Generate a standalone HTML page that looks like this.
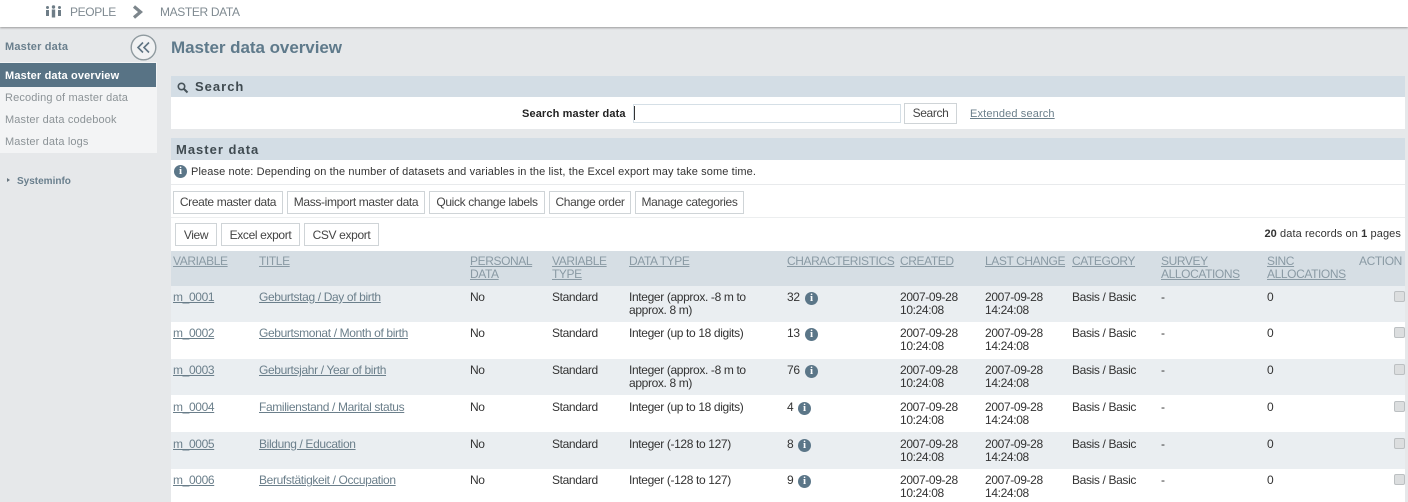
<!DOCTYPE html>
<html><head><meta charset="utf-8"><style>
html,body{margin:0;padding:0;width:1408px;height:502px;overflow:hidden}
body{position:relative;background:#e6e8ea}
#w{left:0;top:0;width:1408px;height:502px;overflow:hidden;background:#e6e8ea;font:12px/13px "Liberation Sans",sans-serif;letter-spacing:-.36px;color:#333;filter:blur(.3px)}
#w,#w *{position:absolute;box-sizing:border-box;white-space:nowrap}
a,.a{color:#6b7f8b;text-decoration:underline}
.h{color:#8a9aa4;text-decoration:underline;top:255px;letter-spacing:-.4px}
.b{background:#fff;border:1px solid #cfd4d7;color:#444;text-align:center;height:23px;line-height:21px}
.band{left:171px;width:1234px;background:#d3dde5}
.sec{font-weight:bold;font-size:13px;letter-spacing:1px;color:#3f4a50;line-height:15px}
.r{left:171px;width:1234px}
.t{background:#eaeef1}
.s{font-size:11px;color:#8c9397;left:5px;letter-spacing:.14px}
.c{width:11px;height:11px;left:1394px;background:#dcdedf;border:1px solid #bcc0c2;border-radius:2px}
.i{width:13px;height:13px;border-radius:50%;background:#5b7688;color:#fff;font:bold 11px/13px "Liberation Serif",serif;letter-spacing:0;text-align:center}
.x{height:28px}
</style></head><body><div id="w">
<div style="left:0;top:0;width:1408px;height:27px;background:#fff;box-shadow:0 1px 2px #9a9a9a"></div>
<svg style="left:45px;top:5px" width="17" height="13" viewBox="0 0 17 13" fill="#6e7d87"><circle cx="2.500" cy="2.500" r="1.500"/><circle cx="8.500" cy="2" r="1.700"/><circle cx="14.500" cy="2.500" r="1.500"/><rect x="1" y="5" width="3" height="6"/><rect x="6.800" y="4.500" width="3.400" height="8"/><rect x="13" y="5" width="3" height="6"/></svg>
<div style="left:70px;top:6px;color:#7f8a91">PEOPLE</div>
<svg style="left:132px;top:5px" width="13" height="14" viewBox="0 0 13 14"><path d="M2 1.500 L8.500 7 L2 12.500" fill="none" stroke="#7d868c" stroke-width="3.200"/></svg>
<div style="left:160px;top:6px;color:#7f8a91">MASTER DATA</div>

<div style="left:5px;top:41px;font-weight:bold;font-size:11px;letter-spacing:.18px;color:#6a7f8d">Master data</div>
<svg style="left:130px;top:34px" width="27" height="27" viewBox="0 0 27 27"><circle cx="13.500" cy="13.500" r="12.300" fill="#f1f2f3" stroke="#8f9a9f" stroke-width="1.400"/><path d="M13 8.500 L8 13.500 L13 18.500 M19 8.500 L14 13.500 L19 18.500" fill="none" stroke="#5f7482" stroke-width="1.600"/></svg>
<div style="left:0;top:62px;width:157px;height:91px;background:#f3f4f5"></div>
<div style="left:0;top:63px;width:156px;height:24px;background:#587385"></div>
<div style="left:5px;top:70px;font-weight:bold;font-size:11px;letter-spacing:.15px;color:#fff">Master data overview</div>
<div class="s" style="top:92px">Recoding of master data</div>
<div class="s" style="top:114px">Master data codebook</div>
<div class="s" style="top:136px">Master data logs</div>
<div style="left:7px;top:178px;width:0;height:0;border-left:3px solid #67757e;border-top:2.500px solid transparent;border-bottom:2.500px solid transparent"></div>
<div style="left:17px;top:175px;font-weight:bold;font-size:10px;letter-spacing:0;color:#6a7f8d">Systeminfo</div>

<div style="left:171px;top:38px;font-weight:bold;font-size:17px;letter-spacing:-.05px;line-height:19px;color:#5f7a8b">Master data overview</div>

<div class="band" style="top:76px;height:21px"></div>
<svg style="left:177px;top:82px" width="12" height="12" viewBox="0 0 12 12"><circle cx="4.500" cy="4.500" r="3.200" fill="none" stroke="#47535a" stroke-width="1.600"/><path d="M7 7 L10.500 10.500" stroke="#47535a" stroke-width="2"/></svg>
<div class="sec" style="left:195px;top:79px">Search</div>
<div style="left:171px;top:97px;width:1234px;height:32px;background:#fff"></div>
<div style="left:522px;top:108px;font-weight:bold;font-size:11px;letter-spacing:.12px;color:#222">Search master data</div>
<div style="left:633px;top:104px;width:268px;height:19px;background:#fff;border:1px solid #d5dfe6"></div>
<div style="left:634px;top:106px;width:1px;height:14px;background:#333"></div>
<div class="b" style="left:904px;top:103px;width:53px;height:21px;line-height:19px">Search</div>
<div class="a" style="left:970px;top:108px;font-size:11px;letter-spacing:.14px">Extended search</div>

<div class="band" style="top:138px;height:22px"></div>
<div class="sec" style="left:176px;top:142px">Master data</div>
<div style="left:171px;top:160px;width:1234px;height:342px;background:#fff"></div>
<div class="i" style="left:174px;top:165px">i</div>
<div style="left:191px;top:165px;font-size:11px;letter-spacing:.11px;line-height:14px;color:#333">Please note: Depending on the number of datasets and variables in the list, the Excel export may take some time.</div>
<div style="left:171px;top:184px;width:1234px;height:1px;background:#e8eaec"></div>
<div style="left:171px;top:217px;width:1234px;height:1px;background:#eceeef"></div>
<div class="b" style="left:173px;top:191px;width:110px">Create master data</div>
<div class="b" style="left:287px;top:191px;width:138px">Mass-import master data</div>
<div class="b" style="left:429px;top:191px;width:116px">Quick change labels</div>
<div class="b" style="left:549px;top:191px;width:82px">Change order</div>
<div class="b" style="left:635px;top:191px;width:109px">Manage categories</div>
<div class="b" style="left:175px;top:223px;width:42px;line-height:22px">View</div>
<div class="b" style="left:221px;top:223px;width:79px;line-height:22px">Excel export</div>
<div class="b" style="left:304px;top:223px;width:75px;line-height:22px">CSV export</div>
<div style="right:7px;top:228px;font-size:11px;letter-spacing:.1px;color:#333"><b style="position:static">20</b> data records on <b style="position:static">1</b> pages</div>

<div class="r" style="top:251px;height:35px;background:#d6dee4"></div>
<div class="r t" style="top:286px;height:36px"></div>
<div class="r t" style="top:359px;height:36px"></div>
<div class="r t" style="top:432px;height:37px"></div>
<div class="h" style="left:173px">VARIABLE</div>
<div class="h" style="left:259px">TITLE</div>
<div class="h" style="left:470px">PERSONAL<br>DATA</div>
<div class="h" style="left:552px">VARIABLE<br>TYPE</div>
<div class="h" style="left:629px">DATA TYPE</div>
<div class="h" style="left:787px">CHARACTERISTICS</div>
<div class="h" style="left:900px">CREATED</div>
<div class="h" style="left:985px">LAST CHANGE</div>
<div class="h" style="left:1072px">CATEGORY</div>
<div class="h" style="left:1161px">SURVEY<br>ALLOCATIONS</div>
<div class="h" style="left:1267px">SINC<br>ALLOCATIONS</div>
<div style="left:1359px;top:255px;color:#8a9aa4;letter-spacing:-.4px">ACTION</div>

<div class="x" style="left:0;top:291px;width:1408px"><a style="left:173px">m_0001</a><a style="left:259px">Geburtstag / Day of birth</a><span style="left:470px">No</span><span style="left:552px">Standard</span><span style="left:629px">Integer (approx. -8 m to<br>approx. 8 m)</span><span style="left:787px">32</span><span class="i" style="left:805px;top:1px">i</span><span style="left:900px">2007-09-28<br>10:24:08</span><span style="left:985px">2007-09-28<br>14:24:08</span><span style="left:1072px">Basis / Basic</span><span style="left:1161px">-</span><span style="left:1267px">0</span><span class="c" style="top:0"></span></div>
<div class="x" style="left:0;top:327px;width:1408px"><a style="left:173px">m_0002</a><a style="left:259px">Geburtsmonat / Month of birth</a><span style="left:470px">No</span><span style="left:552px">Standard</span><span style="left:629px">Integer (up to 18 digits)</span><span style="left:787px">13</span><span class="i" style="left:805px;top:1px">i</span><span style="left:900px">2007-09-28<br>10:24:08</span><span style="left:985px">2007-09-28<br>14:24:08</span><span style="left:1072px">Basis / Basic</span><span style="left:1161px">-</span><span style="left:1267px">0</span><span class="c" style="top:0"></span></div>
<div class="x" style="left:0;top:364px;width:1408px"><a style="left:173px">m_0003</a><a style="left:259px">Geburtsjahr / Year of birth</a><span style="left:470px">No</span><span style="left:552px">Standard</span><span style="left:629px">Integer (approx. -8 m to<br>approx. 8 m)</span><span style="left:787px">76</span><span class="i" style="left:805px;top:1px">i</span><span style="left:900px">2007-09-28<br>10:24:08</span><span style="left:985px">2007-09-28<br>14:24:08</span><span style="left:1072px">Basis / Basic</span><span style="left:1161px">-</span><span style="left:1267px">0</span><span class="c" style="top:0"></span></div>
<div class="x" style="left:0;top:401px;width:1408px"><a style="left:173px">m_0004</a><a style="left:259px">Familienstand / Marital status</a><span style="left:470px">No</span><span style="left:552px">Standard</span><span style="left:629px">Integer (up to 18 digits)</span><span style="left:787px">4</span><span class="i" style="left:798px;top:1px">i</span><span style="left:900px">2007-09-28<br>10:24:08</span><span style="left:985px">2007-09-28<br>14:24:08</span><span style="left:1072px">Basis / Basic</span><span style="left:1161px">-</span><span style="left:1267px">0</span><span class="c" style="top:0"></span></div>
<div class="x" style="left:0;top:438px;width:1408px"><a style="left:173px">m_0005</a><a style="left:259px">Bildung / Education</a><span style="left:470px">No</span><span style="left:552px">Standard</span><span style="left:629px">Integer (-128 to 127)</span><span style="left:787px">8</span><span class="i" style="left:798px;top:1px">i</span><span style="left:900px">2007-09-28<br>10:24:08</span><span style="left:985px">2007-09-28<br>14:24:08</span><span style="left:1072px">Basis / Basic</span><span style="left:1161px">-</span><span style="left:1267px">0</span><span class="c" style="top:0"></span></div>
<div class="x" style="left:0;top:474px;width:1408px"><a style="left:173px">m_0006</a><a style="left:259px">Berufstätigkeit / Occupation</a><span style="left:470px">No</span><span style="left:552px">Standard</span><span style="left:629px">Integer (-128 to 127)</span><span style="left:787px">9</span><span class="i" style="left:798px;top:1px">i</span><span style="left:900px">2007-09-28<br>10:24:08</span><span style="left:985px">2007-09-28<br>14:24:08</span><span style="left:1072px">Basis / Basic</span><span style="left:1161px">-</span><span style="left:1267px">0</span><span class="c" style="top:0"></span></div>
</div></body></html>
